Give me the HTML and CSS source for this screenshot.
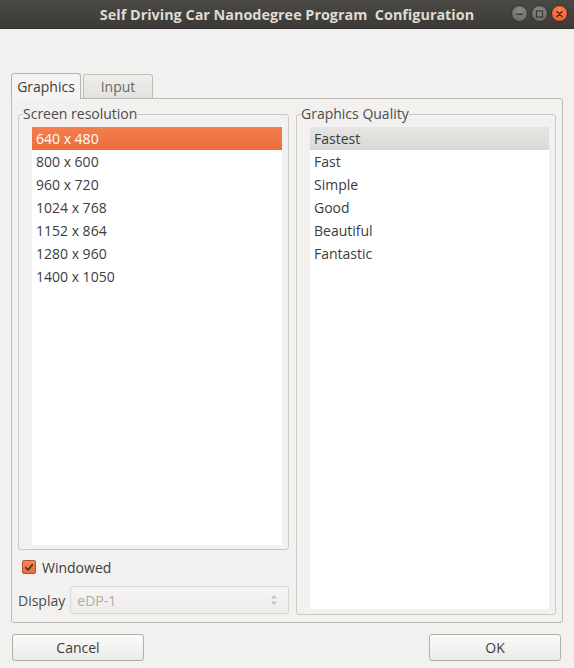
FILE: index.html
```html
<!DOCTYPE html>
<html>
<head>
<meta charset="utf-8">
<link rel="stylesheet" href="styles.css">
</head>
<body>
<div class="window">
  <header class="titlebar">
    <span class="title">Self Driving Car Nanodegree Program&nbsp; Configuration</span>
    <div class="wm-buttons">
      <span class="wm-btn wm-min"><svg width="16" height="16" viewBox="0 0 16 16"><rect x="4.5" y="7.5" width="7" height="1.6" fill="#3b3a36"/></svg></span>
      <span class="wm-btn wm-max"><svg width="16" height="16" viewBox="0 0 16 16"><rect x="4.8" y="4.8" width="6.4" height="6.4" fill="none" stroke="#3b3a36" stroke-width="1.4"/></svg></span>
      <span class="wm-btn wm-close"><svg width="16" height="16" viewBox="0 0 16 16"><path d="M5.3 5.3 L10.7 10.7 M10.7 5.3 L5.3 10.7" stroke="#3b2a22" stroke-width="1.6" stroke-linecap="round"/></svg></span>
    </div>
  </header>

  <main class="body">
    <div class="tabs">
      <div class="tab tab-active">Graphics</div>
      <div class="tab">Input</div>
    </div>
    <section class="pane">
      <div class="col col-left">
        <fieldset class="group group-left">
          <legend>Screen resolution</legend>
          <ul class="list list-left">
            <li class="item item-sel">640 x 480</li>
            <li class="item">800 x 600</li>
            <li class="item">960 x 720</li>
            <li class="item">1024 x 768</li>
            <li class="item">1152 x 864</li>
            <li class="item">1280 x 960</li>
            <li class="item">1400 x 1050</li>
          </ul>
        </fieldset>
        <label class="check-row">
          <span class="checkbox"><svg width="13" height="13" viewBox="0 0 13 13"><path d="M3 6.6 L5.4 9.2 L10.2 3.4" fill="none" stroke="#4a3124" stroke-width="1.8" stroke-linecap="round" stroke-linejoin="round"/></svg></span>
          <span>Windowed</span>
        </label>
        <div class="display-row">
          <span class="display-label">Display</span>
          <div class="combo">
            <span>eDP-1</span>
            <svg class="spin" width="8" height="14" viewBox="0 0 8 14"><path d="M4 2 L7 5.5 L1 5.5 Z M4 12 L7 8.5 L1 8.5 Z" fill="#c2c0bd"/></svg>
          </div>
        </div>
      </div>
      <div class="col col-right">
        <fieldset class="group group-right">
          <legend>Graphics Quality</legend>
          <ul class="list list-right">
            <li class="item item-cur">Fastest</li>
            <li class="item">Fast</li>
            <li class="item">Simple</li>
            <li class="item">Good</li>
            <li class="item">Beautiful</li>
            <li class="item">Fantastic</li>
          </ul>
        </fieldset>
      </div>
    </section>
    <footer class="buttons">
      <button class="btn">Cancel</button>
      <button class="btn">OK</button>
    </footer>
  </main>
</div>
</body>
</html>
```

FILE: styles.css
```css
* { box-sizing: border-box; }
html, body { margin: 0; padding: 0; }
body {
  width: 574px;
  height: 668px;
  background: #f2f1f0;
  font-family: "Open Sans", "DejaVu Sans", sans-serif;
  font-size: 14px;
  color: #3c3c3c;
  overflow: hidden;
}
.window { width: 574px; height: 668px; display: flex; flex-direction: column; }

.titlebar {
  height: 29px;
  flex: none;
  display: flex;
  align-items: center;
  justify-content: center;
  position: relative;
  background: linear-gradient(#4a4944, #3c3b37);
  border-bottom: 1px solid #2f2e2b;
}
.title {
  color: #dfdbd2;
  font-weight: bold;
  font-size: 14.4px;
}
.wm-buttons {
  position: absolute;
  right: 6px;
  top: 5px;
  display: flex;
  gap: 3px;
}
.wm-btn {
  width: 17px; height: 17px;
  border-radius: 50%;
  display: flex; align-items: center; justify-content: center;
  background: radial-gradient(circle at 50% 35%, #8d8b86, #65635e);
  border: 1px solid #34332f;
}
.wm-close { background: radial-gradient(circle at 50% 35%, #f88a5b, #e9541f); border-color: #3e2a22; }

.body { flex: 1; padding: 44px 11px 0 11px; display: flex; flex-direction: column; }

.tabs { display: flex; gap: 2px; height: 25px; align-items: flex-end; position: relative; z-index: 1; }
.tab {
  width: 70px; height: 24px;
  border: 1px solid #c0bdb8;
  border-bottom: none;
  border-radius: 3px 3px 0 0;
  background: linear-gradient(#efeeec, #e3e2df);
  text-align: center;
  line-height: 24px;
  font-size: 14px;
  color: #6a6966;
}
.tab-active {
  height: 26px;
  background: #f5f4f3;
  color: #3c3c3c;
  margin-bottom: -1px;
  line-height: 25px;
  border-color: #b8b5b0;
}

.pane {
  width: 552px;
  height: 525px;
  border: 1px solid #bdbab5;
  border-radius: 0 3px 3px 3px;
  background: #f2f1f0;
  padding: 6px 6px 6px 6px;
  display: flex;
  gap: 7px;
}
.col { display: flex; flex-direction: column; }
.col-left { width: 271px; }
.col-right { width: 260px; }

.group {
  margin: 0;
  border: 1px solid #cac8c4;
  border-radius: 3px;
  padding: 0 6px 4px 13px;
  min-width: 0;
  display: block;
}
.group legend {
  padding: 0;
  margin-left: -9px;
  font-size: 14px;
  color: #4c4c4c;
  line-height: 18px;
}
.group-left { height: 445px; }
.group-right { height: 510px; padding-bottom: 5px; }

.list {
  list-style: none;
  margin: 4px 0 0 0;
  padding: 0;
  background: #ffffff;
}
.list-left { height: 418px; }
.list-right { height: 482px; }
.item {
  height: 23px;
  line-height: 23px;
  padding-left: 4px;
  white-space: nowrap;
}
.item-sel {
  background: linear-gradient(#f37e4f, #ed6e3c);
  color: #ffffff;
}
.item-cur {
  background: linear-gradient(#e6e5e3, #dad9d6);
  color: #3c3c3c;
}

.check-row {
  display: flex;
  align-items: center;
  gap: 6px;
  margin: 8px 0 0 4px;
  height: 18px;
}
.checkbox {
  width: 14px; height: 14px;
  border: 1px solid #b4532c;
  border-radius: 2px;
  background: linear-gradient(#f08a5e, #e96a39);
  display: flex; align-items: center; justify-content: center;
}
.checkbox svg { display: block; }

.display-row {
  display: flex;
  align-items: center;
  margin-top: 10px;
  gap: 5px;
}
.display-label { color: #4c4c4c; }
.combo {
  flex: 1;
  height: 28px;
  border: 1px solid #d8d6d2;
  border-radius: 3px;
  background: linear-gradient(#f5f4f3, #eeedec);
  display: flex;
  align-items: center;
  justify-content: space-between;
  padding: 0 10px 0 6px;
  color: #aeaca8;
}

.buttons {
  display: flex;
  justify-content: space-between;
  margin-top: 11px;
  padding: 0 2px 0 1px;
}
.btn {
  width: 132px;
  height: 27px;
  border: 1px solid #b3b0ab;
  border-radius: 3px;
  background: linear-gradient(#fbfbfa, #ebeae8);
  font-family: "Open Sans", "DejaVu Sans", sans-serif;
  font-size: 14px;
  color: #3c3c3c;
  padding: 0;
}
```
